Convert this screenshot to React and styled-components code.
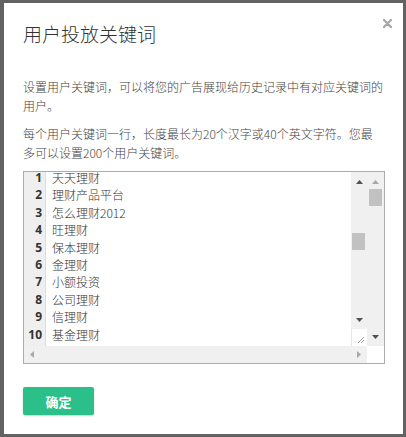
import React from "react";
import styled, { createGlobalStyle } from "styled-components";

const GlobalStyle = createGlobalStyle`
    html, body {
        margin: 0;
        padding: 0;
        background: #626262;
    }
    body {
        font-family: "Noto Sans CJK SC", "Noto Sans", sans-serif;
    }
`;

const Page = styled.div`
    width: 406px;
    height: 437px;
    padding: 3px 3px 3px 4px;
    box-sizing: border-box;
`;

const Modal = styled.div`
    position: relative;
    width: 399px;
    height: 431px;
    background: #fff;
    box-sizing: border-box;
    padding: 18px 18px 0 19px;
    color: #333;
`;

const CloseButton = styled.button`
    position: absolute;
    top: 12px;
    right: 8px;
    width: 16px;
    height: 16px;
    padding: 0;
    border: none;
    background: none;
    cursor: pointer;
    display: flex;
    align-items: center;
    justify-content: center;
`;

const Title = styled.h3`
    margin: 0;
    font-size: 19px;
    line-height: 26px;
    font-weight: 300;
    color: #333;
`;

const Body = styled.div`
    margin-top: 30px;
    width: 362px;
`;

const Paragraph = styled.p`
    margin: 0 0 9px;
    font-size: 12px;
    line-height: 19px;
    font-weight: 300;
    color: #444;
`;

const EditorBox = styled.div`
    margin-top: 8px;
    width: 362px;
    height: 193px;
    box-sizing: border-box;
    border: 1px solid #a9abb8;
    display: grid;
    grid-template-columns: 1fr 17px;
    grid-template-rows: 1fr 17px;
`;

const Editor = styled.div`
    display: flex;
    overflow: hidden;
    background: #fff;
`;

const Lines = styled.div`
    flex: 1;
    display: flex;
    overflow: hidden;
`;

// the list is scrolled a few pixels, so the first row sits against the border
const LineList = styled.div`
    display: flex;
    flex-direction: column;
    margin-top: -3px;
`;

const Gutter = styled.div`
    width: 21px;
    flex-shrink: 0;
    background: #efefef;
    border-right: 1px solid #ddd;
    overflow: hidden;
`;

const LineNo = styled.div`
    height: 17.4px;
    line-height: 17.4px;
    font-size: 12px;
    font-weight: bold;
    color: #333;
    text-align: right;
    padding-right: 3px;
    font-family: "Open Sans", "Noto Sans", sans-serif;
`;

const LineText = styled.div`
    height: 17.4px;
    line-height: 17.4px;
    font-size: 12px;
    font-weight: 300;
    color: #333;
    padding-left: 6px;
    white-space: nowrap;
`;

const ScrollTrack = styled.div`
    background: #f0f0f0;
    display: flex;
    flex-direction: ${(p) => (p.$horizontal ? "row" : "column")};
    align-items: center;
    justify-content: space-between;
    padding: ${(p) => (p.$horizontal ? "0 6px" : "8px 0 7px")};
    position: relative;
`;

const InnerScroll = styled.div`
    width: 16px;
    flex-shrink: 0;
    display: grid;
    grid-template-rows: 1fr 17px;
`;

const Thumb = styled.div`
    position: absolute;
    left: ${(p) => p.$left}px;
    top: ${(p) => p.$top}px;
    width: 13px;
    height: 17px;
    background: #c1c1c1;
`;

const Resizer = styled.div`
    background: #fff;
    border-left: 1px solid #e6e6e6;
    display: flex;
    align-items: flex-end;
    justify-content: flex-end;
    padding: 0 2px 2px 0;
`;

const Corner = styled.div`
    background: #fff;
`;

const Footer = styled.div`
    margin-top: 23px;
`;

const ConfirmButton = styled.button`
    width: 71px;
    height: 28px;
    padding: 0;
    border: none;
    border-radius: 2px;
    background: #2bbf8a;
    color: #fff;
    font-family: inherit;
    font-size: 13px;
    font-weight: bold;
    box-shadow: 0 1px 2px rgba(0, 0, 0, 0.2);
    cursor: pointer;
`;

const Arrow = ({ dir, color }) => {
    const shapes = {
        up: "0,4 3.5,0 7,4",
        down: "0,0 7,0 3.5,4",
        left: "4,0 4,7 0,3.5",
        right: "0,0 4,3.5 0,7",
    };
    const vertical = dir === "up" || dir === "down";
    return (
        <svg width={vertical ? 7 : 4} height={vertical ? 4 : 7} style={{ display: "block" }}>
            <polygon points={shapes[dir]} fill={color} />
        </svg>
    );
};

const keywords = [
    "天天理财",
    "理财产品平台",
    "怎么理财2012",
    "旺理财",
    "保本理财",
    "金理财",
    "小额投资",
    "公司理财",
    "信理财",
    "基金理财",
    "家庭理财",
];

const App = () => {
    return (
        <>
            <GlobalStyle />
            <Page>
                <Modal>
                    <CloseButton aria-label="close">
                        <svg width="9" height="9" viewBox="0 0 9 9">
                            <path d="M1 1L8 8M8 1L1 8" stroke="#a8a8a8" strokeWidth="2.4" strokeLinecap="round" />
                        </svg>
                    </CloseButton>
                    <Title>用户投放关键词</Title>
                    <Body>
                        <Paragraph>设置用户关键词，可以将您的广告展现给历史记录中有对应关键词的用户。</Paragraph>
                        <Paragraph>
                            每个用户关键词一行，长度最长为20个汉字或40个英文字符。您最
                            <br />
                            多可以设置200个用户关键词。
                        </Paragraph>
                        <EditorBox>
                            <Editor>
                                <Gutter>
                                    <LineList>
                                        {keywords.map((_, i) => (
                                            <LineNo key={i}>{i + 1}</LineNo>
                                        ))}
                                    </LineList>
                                </Gutter>
                                <Lines>
                                    <LineList>
                                        {keywords.map((k) => (
                                            <LineText key={k}>{k}</LineText>
                                        ))}
                                    </LineList>
                                </Lines>
                                <InnerScroll>
                                    <ScrollTrack>
                                        <Arrow dir="up" color="#505050" />
                                        <Thumb $left={1} $top={61} />
                                        <Arrow dir="down" color="#505050" />
                                    </ScrollTrack>
                                    <Resizer>
                                        <svg width="8" height="8" viewBox="0 0 8 8">
                                            <path d="M1 7L7 1M4 7L7 4" stroke="#888" strokeWidth="0.8" />
                                        </svg>
                                    </Resizer>
                                </InnerScroll>
                            </Editor>
                            <ScrollTrack>
                                <Arrow dir="up" color="#a8a8a8" />
                                <Thumb $left={2} $top={17} />
                                <Arrow dir="down" color="#505050" />
                            </ScrollTrack>
                            <ScrollTrack $horizontal>
                                <Arrow dir="left" color="#a8a8a8" />
                                <Arrow dir="right" color="#a8a8a8" />
                            </ScrollTrack>
                            <Corner />
                        </EditorBox>
                    </Body>
                    <Footer>
                        <ConfirmButton>确定</ConfirmButton>
                    </Footer>
                </Modal>
            </Page>
        </>
    );
};

export default App;
